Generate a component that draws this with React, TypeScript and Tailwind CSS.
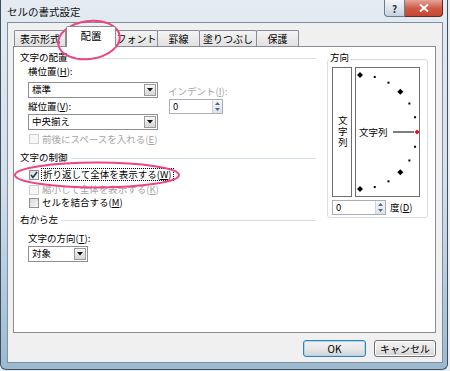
import React from "react";

const fontCls = "font-['Noto_Sans_CJK_JP','Noto_Sans',sans-serif]";

function Mn({ c }: { c: string }) {
  return <span className="underline underline-offset-1">{c}</span>;
}

function Header({ title }: { title: string }) {
  return (
    <div className="flex items-center h-[14px]">
      <span className="whitespace-nowrap">{title}</span>
      <div className="flex-1 h-px bg-[#d5dfe5] ml-[3px] mt-[3px]" />
    </div>
  );
}

function DropButton() {
  return (
    <div className="w-[12px] h-[12px] border border-[#9a9a9a] bg-gradient-to-b from-[#f6f6f6] to-[#d6d6d6] flex items-center justify-center">
      <svg width="6" height="4" viewBox="0 0 6 4">
        <path d="M0 0 H6 L3 3.5 Z" fill="#111" />
      </svg>
    </div>
  );
}

function Select({ value, w }: { value: string; w: string }) {
  return (
    <div className={`${w} h-[16px] border border-[#8f8f8f] bg-white flex items-center justify-between pl-[3px] pr-px`}>
      <span className="leading-none">{value}</span>
      <DropButton />
    </div>
  );
}

function Spinner({ value }: { value: string }) {
  return (
    <div className="w-[54px] h-[15px] border border-[#abadb3] bg-white flex items-center justify-between pl-[3px]">
      <span className="leading-none">{value}</span>
      <div className="w-[10px] h-full flex flex-col border-l border-[#d0d4da] bg-gradient-to-b from-[#f4f6f8] to-[#dde3ea]">
        <div className="flex-1 flex items-center justify-center">
          <svg width="5" height="3" viewBox="0 0 5 3">
            <path d="M0 3 H5 L2.5 0 Z" fill="#4d6a8c" />
          </svg>
        </div>
        <div className="flex-1 flex items-center justify-center">
          <svg width="5" height="3" viewBox="0 0 5 3">
            <path d="M0 0 H5 L2.5 3 Z" fill="#4d6a8c" />
          </svg>
        </div>
      </div>
    </div>
  );
}

function Check({
  label,
  checked,
  disabled,
  focus,
  h,
  mt,
}: {
  label: React.ReactNode;
  checked?: boolean;
  disabled?: boolean;
  focus?: boolean;
  h: string;
  mt: string;
}) {
  return (
    <div className={`flex items-center ${h} ${mt} pl-[9px]`}>
      <div
        className={`w-[10px] h-[10px] border flex items-center justify-center ${
          disabled
            ? "border-[#cfcfcf] bg-[#f6f6f6]"
            : "border-[#8e8f8f] bg-gradient-to-br from-[#d9d9d9] to-[#f7f7f7]"
        }`}
      >
        {checked && (
          <svg width="8" height="8" viewBox="0 0 8 8">
            <path d="M1 4 L3 6.5 L7 1" stroke="#1e395b" strokeWidth="1.6" fill="none" />
          </svg>
        )}
      </div>
      <span
        className={`ml-[2px] leading-[11px] whitespace-nowrap ${disabled ? "text-[#a3a3a3]" : ""} ${
          focus ? "border border-dotted border-black px-px" : "px-px"
        }`}
      >
        {label}
      </span>
    </div>
  );
}

function ArcBox() {
  const cx = 4;
  const cy = 64;
  const r = 57;
  const pts = [];
  for (let a = -90; a <= 90; a += 15) {
    const rad = (a * Math.PI) / 180;
    pts.push({ a, x: cx + r * Math.cos(rad), y: cy - r * Math.sin(rad) });
  }
  return (
    <div className="w-[65px] h-[130px] border border-[#6e6e6e] bg-white relative ml-[3px]">
      <svg width="63" height="128" viewBox="0 0 63 128" className="absolute left-0 top-0">
        <line x1="37" y1="64" x2="58" y2="64" stroke="#000" strokeWidth="1" />
        {pts.map((p) => {
          if (p.a === 0)
            return <path key={p.a} d={`M${p.x} ${p.y - 2.5} L${p.x + 2.5} ${p.y} L${p.x} ${p.y + 2.5} L${p.x - 2.5} ${p.y} Z`} fill="#e01010" />;
          if (p.a % 45 === 0)
            return <path key={p.a} d={`M${p.x} ${p.y - 3} L${p.x + 3} ${p.y} L${p.x} ${p.y + 3} L${p.x - 3} ${p.y} Z`} fill="#000" />;
          return <rect key={p.a} x={p.x - 1} y={p.y - 1} width="2" height="2" fill="#000" />;
        })}
      </svg>
      <span className="absolute left-[3px] top-[57px] leading-[14px] whitespace-nowrap">文字列</span>
    </div>
  );
}

const tabs = [
  { t: "表示形式", w: "w-[52px]" },
  { t: "配置", w: "w-[50px]", sel: true },
  { t: "フォント", w: "w-[43px]" },
  { t: "罫線", w: "w-[43px]" },
  { t: "塗りつぶし", w: "w-[58px]" },
  { t: "保護", w: "w-[43px]" },
];

export default function App() {
  return (
    <div className={`w-[450px] h-[371px] bg-[#e9eef3] relative overflow-hidden text-[9.5px] text-black ${fontCls}`}>
      <div className="w-[448px] h-[370px] border border-t-0 border-[#3e4f60] rounded-b-[6px] bg-gradient-to-b from-[#e4ebf2] via-[#d3dfea] to-[#9cb9d0] pl-[6px] pr-[4px] flex flex-col">
        {/* title bar */}
        <div className="h-[22px] flex items-start justify-between">
          <span className="text-[10.5px] leading-[14px] mt-[5px] text-[#111]">セルの書式設定</span>
          <div className="flex h-[17px]">
            <div className="w-[21px] h-full border border-t-0 border-[#6a7b8c] rounded-bl-[4px] bg-gradient-to-b from-[#f3f6f9] via-[#dfe6ee] to-[#c3d0dd] flex items-center justify-center text-[10px] text-[#333] font-bold">
              ?
            </div>
            <div className="w-[38px] h-full border border-t-0 border-l-0 border-[#5e2a24] rounded-br-[4px] bg-gradient-to-b from-[#e3a497] via-[#cf5b48] to-[#c8452f] flex items-center justify-center">
              <svg width="10" height="8" viewBox="0 0 10 8">
                <path d="M1 0.5 L9 7.5 M9 0.5 L1 7.5" stroke="#fff" strokeWidth="2" />
              </svg>
            </div>
          </div>
        </div>

        {/* client area */}
        <div className="w-[436px] h-[341px] border border-[#7d8fa3] bg-[#f0f0f0] flex flex-col">
          <div className="mt-[3px] ml-[5px] h-[20px] flex items-end text-[10px]">
            {tabs.map((tb) =>
              tb.sel ? (
                <div
                  key={tb.t}
                  className={`${tb.w} h-[21px] -mb-px relative z-10 bg-white border border-b-0 border-[#898c95] rounded-t-[2px] flex items-center justify-center pb-[2px] text-[10.5px]`}
                >
                  {tb.t}
                </div>
              ) : (
                <div
                  key={tb.t}
                  className={`${tb.w} h-[16px] border border-b-0 border-[#898c95] -ml-px first:ml-px rounded-t-[2px] bg-gradient-to-b from-[#f4f4f4] to-[#e1e1e1] flex items-center justify-center`}
                >
                  {tb.t}
                </div>
              )
            )}
          </div>

          {/* tab panel */}
          <div className="ml-[5px] w-[423px] h-[287px] border border-[#898c95] bg-white flex">
            <div className="w-[302px] pl-[6px] flex flex-col">
              <div className="mt-[3px]">
                <Header title="文字の配置" />
              </div>
              <div className="flex pl-[8px]">
                <div className="flex flex-col">
                  <div className="h-[14px] flex items-center">
                    横位置(<Mn c="H" />):
                  </div>
                  <div className="mt-[4px]">
                    <Select value="標準" w="w-[130px]" />
                  </div>
                  <div className="h-[14px] mt-px flex items-center">
                    縦位置(<Mn c="V" />):
                  </div>
                  <div className="mt-px">
                    <Select value="中央揃え" w="w-[130px]" />
                  </div>
                </div>
                <div className="flex flex-col ml-[10px]">
                  <div className="h-[14px] mt-[20px] flex items-center text-[#a3a3a3] whitespace-nowrap">
                    インデント(<Mn c="I" />):
                  </div>
                  <div className="mt-px ml-px">
                    <Spinner value="0" />
                  </div>
                </div>
              </div>
              <Check
                h="h-[14px]"
                mt="mt-[2px]"
                disabled
                label={
                  <>
                    前後にスペースを入れる(<Mn c="E" />)
                  </>
                }
              />
              <div className="mt-[4px]">
                <Header title="文字の制御" />
              </div>
              <Check
                h="h-[13px]"
                mt="mt-[4px]"
                checked
                focus
                label={
                  <>
                    折り返して全体を表示する(<Mn c="W" />)
                  </>
                }
              />
              <Check
                h="h-[13px]"
                mt="mt-[2px]"
                disabled
                label={
                  <>
                    縮小して全体を表示する(<Mn c="K" />)
                  </>
                }
              />
              <Check
                h="h-[13px]"
                mt="mt-0"
                label={
                  <>
                    セルを結合する(<Mn c="M" />)
                  </>
                }
              />
              <div className="mt-[3px]">
                <Header title="右から左" />
              </div>
              <div className="pl-[8px] flex flex-col">
                <div className="h-[14px] mt-[5px] flex items-center">
                  文字の方向(<Mn c="T" />):
                </div>
                <div className="mt-px">
                  <Select value="対象" w="w-[60px]" />
                </div>
              </div>
            </div>

            {/* orientation group */}
            <div className="ml-[11px] mt-[12px] w-[101px] h-[159px] border border-[#d5dfe5] rounded-[3px] relative pt-[7px] pl-[4px]">
              <span className="absolute top-[-10px] left-[1px] bg-white px-px leading-[14px]">方向</span>
              <div className="flex">
                <div className="w-[20px] h-[130px] border border-[#6e6e6e] bg-white flex items-center justify-center">
                  <span className="[writing-mode:vertical-rl] [text-orientation:upright] tracking-[1.5px] leading-none">文字列</span>
                </div>
                <ArcBox />
              </div>
              <div className="flex items-center mt-[3px]">
                <Spinner value="0" />
                <span className="ml-[4px]">
                  度(<Mn c="D" />)
                </span>
              </div>
            </div>
          </div>

          {/* buttons */}
          <div className="ml-[5px] w-[423px] mt-[7px] flex justify-end gap-[8px] text-[10px]">
            <div className="w-[63px] h-[17px] rounded-[3px] border border-[#3c7fb1] shadow-[inset_0_0_0_1px_#9fdcf4] bg-gradient-to-b from-[#f2f2f2] via-[#e8e8e8] to-[#d2d2d2] flex items-center justify-center">
              OK
            </div>
            <div className="w-[62px] h-[17px] rounded-[3px] border border-[#707070] shadow-[inset_0_0_0_1px_#fbfbfb] bg-gradient-to-b from-[#f2f2f2] via-[#e8e8e8] to-[#d2d2d2] flex items-center justify-center">
              キャンセル
            </div>
          </div>
        </div>
      </div>

      {/* annotation circles */}
      <svg width="450" height="371" className="absolute left-0 top-0 pointer-events-none">
        <ellipse cx="89" cy="40" rx="31" ry="19" fill="none" stroke="#ef4480" strokeWidth="2" transform="rotate(-8 89 40)" />
        <ellipse cx="97" cy="175" rx="82" ry="12.5" fill="none" stroke="#ef4480" strokeWidth="2" />
      </svg>
    </div>
  );
}
